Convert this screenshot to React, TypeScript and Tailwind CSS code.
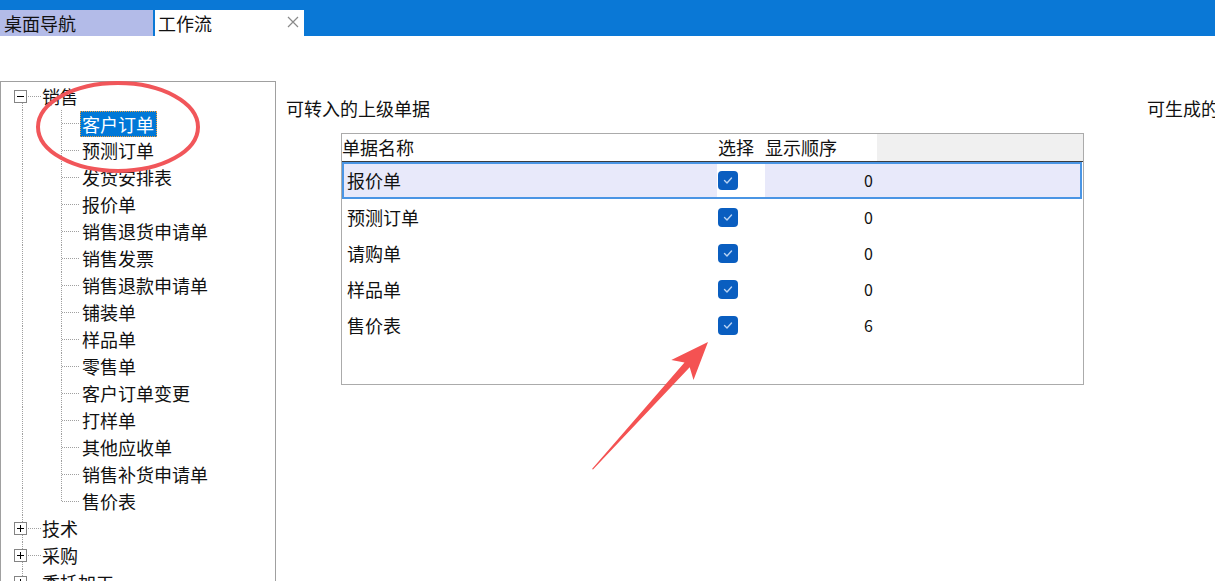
import React from 'react';

const FONT = "font-['Noto_Sans_CJK_SC','Microsoft_YaHei',sans-serif]";

const children = [
  '客户订单', '预测订单', '发货安排表', '报价单', '销售退货申请单', '销售发票',
  '销售退款申请单', '铺装单', '样品单', '零售单', '客户订单变更', '打样单',
  '其他应收单', '销售补货申请单', '售价表',
];

function RootRow({ label, expanded, lineAbove }: { label: string; expanded: boolean; lineAbove: boolean }) {
  return (
    <div className="flex h-[27px] items-center">
      <svg width="41" height="27" className="shrink-0" shapeRendering="crispEdges">
        {lineAbove && <line x1="21.5" y1="0" x2="21.5" y2="7" stroke="#a0a0a0" strokeDasharray="1 1" />}
        <line x1="21.5" y1="20" x2="21.5" y2="27" stroke="#a0a0a0" strokeDasharray="1 1" />
        <line x1="27" y1="13.5" x2="40" y2="13.5" stroke="#a0a0a0" strokeDasharray="1 1" />
        <rect x="13.5" y="7.5" width="12" height="12" fill="#fff" stroke="#848484" />
        <rect x="16" y="13" width="7" height="1" fill="#000" />
        {!expanded && <rect x="19" y="10" width="1" height="7" fill="#000" />}
      </svg>
      <span className="text-[18px] leading-[27px] whitespace-nowrap text-[#111]">{label}</span>
    </div>
  );
}

function ChildRow({ label, last, selected }: { label: string; last: boolean; selected: boolean }) {
  return (
    <div className="flex h-[27px] items-center">
      <svg width="79" height="27" className="shrink-0" shapeRendering="crispEdges">
        <line x1="21.5" y1="0" x2="21.5" y2="27" stroke="#a0a0a0" strokeDasharray="1 1" />
        <line x1="60.5" y1="0" x2="60.5" y2={last ? 14 : 27} stroke="#a0a0a0" strokeDasharray="1 1" />
        <line x1="61" y1="13.5" x2="79" y2="13.5" stroke="#a0a0a0" strokeDasharray="1 1" />
      </svg>
      {selected ? (
        <span className="h-[26px] pl-[1px] pr-[2px] text-[18px] leading-[24px] whitespace-nowrap bg-[#0078d7] text-white border border-dotted border-[#f0a040]">
          {label}
        </span>
      ) : (
        <span className="pl-[2px] text-[18px] leading-[27px] whitespace-nowrap text-[#111]">{label}</span>
      )}
    </div>
  );
}

function Check() {
  return (
    <div className="w-[20px] h-[19px] rounded-[4px] bg-[#0a5ec0] flex items-center justify-center">
      <svg width="20" height="19" viewBox="0 0 20 19">
        <polyline points="6.5,9.5 9,12 13.5,7" fill="none" stroke="#b9d3f3" strokeWidth="1.4" strokeLinecap="round" strokeLinejoin="round" />
      </svg>
    </div>
  );
}

const rows = [
  { name: '报价单', order: '0' },
  { name: '预测订单', order: '0' },
  { name: '请购单', order: '0' },
  { name: '样品单', order: '0' },
  { name: '售价表', order: '6' },
];

export default function App() {
  return (
    <div className={`relative w-[1215px] h-[581px] overflow-hidden bg-white text-[#111] ${FONT}`}>
      {/* top tab bar */}
      <div className="h-[36px] bg-[#0a78d6] flex items-end">
        <div className="w-[153px] h-[26px] bg-[#b3bbe8] flex items-center pl-[4px] text-[18px] leading-[26px] text-[#111]">
          桌面导航
        </div>
        <div className="ml-[2px] w-[149px] h-[26px] bg-white flex items-center pl-[3px] text-[18px] leading-[26px] text-[#111]">
          <span>工作流</span>
          <svg width="12" height="12" viewBox="0 0 12 12" className="ml-auto mr-[5px] -mt-[2px]">
            <path d="M1 1 L11 11 M11 1 L1 11" stroke="#8a8a8a" strokeWidth="1.2" />
          </svg>
        </div>
      </div>

      <div className="flex">
        {/* tree panel */}
        <div className="mt-[45px] w-[276px] h-[520px] border border-b-0 border-[#a0a0a0] pt-[1px] shrink-0">
          <RootRow label="销售" expanded lineAbove={false} />
          {children.map((c, i) => (
            <ChildRow key={c} label={c} last={i === children.length - 1} selected={i === 0} />
          ))}
          <RootRow label="技术" expanded={false} lineAbove />
          <RootRow label="采购" expanded={false} lineAbove />
          <RootRow label="委托加工" expanded={false} lineAbove />
        </div>

        {/* right area */}
        <div className="flex-1 pt-[60px] pl-[10px] overflow-hidden">
          <div className="flex h-[24px] text-[18px] leading-[24px] whitespace-nowrap">
            <span className="w-[861px] shrink-0">可转入的上级单据</span>
            <span>可生成的下级单据</span>
          </div>

          <div className="mt-[13px] ml-[55px] w-[743px] h-[252px] border border-[#ababab] flex flex-col">
            {/* header */}
            <div className="flex h-[28px] border-b border-[#3c3c3c] text-[18px] leading-[27px]">
              <div className="w-[375px] bg-white">单据名称</div>
              <div className="w-[48px] bg-white pl-[1px]">选择</div>
              <div className="w-[112px] bg-white">显示顺序</div>
              <div className="flex-1 bg-[#f0f0f0]" />
            </div>
            {rows.map((r, i) =>
              i === 0 ? (
                <div key={r.name} className="flex h-[37px] border-2 border-[#4a95e4] bg-[#e8e9fa] mr-[1px]">
                  <div className="w-[373px] pl-[3px] text-[18px] leading-[33px]">{r.name}</div>
                  <div className="w-[48px] bg-white flex items-center pl-[1px]">
                    <Check />
                  </div>
                  <div className="w-[112px] text-right pr-[4px] text-[16px] leading-[33px]">{r.order}</div>
                  <div className="flex-1" />
                </div>
              ) : (
                <div key={r.name} className="flex h-[36px]">
                  <div className="w-[375px] pl-[5px] text-[18px] leading-[36px]">{r.name}</div>
                  <div className="w-[48px] flex items-center pl-[1px]">
                    <Check />
                  </div>
                  <div className="w-[112px] text-right pr-[4px] text-[16px] leading-[36px]">{r.order}</div>
                  <div className="flex-1" />
                </div>
              )
            )}
          </div>
        </div>
      </div>

      {/* annotations */}
      <svg className="absolute left-0 top-0 pointer-events-none" width="1215" height="581">
        <ellipse cx="118" cy="127" rx="80" ry="44" fill="none" stroke="#f1565a" strokeWidth="4" />
        <polygon
          points="592,469 684.5,362.5 671.3,359.9 708,342 693.5,380.1 689.7,367.3 593,469.5"
          fill="#f45252"
        />
      </svg>
    </div>
  );
}
